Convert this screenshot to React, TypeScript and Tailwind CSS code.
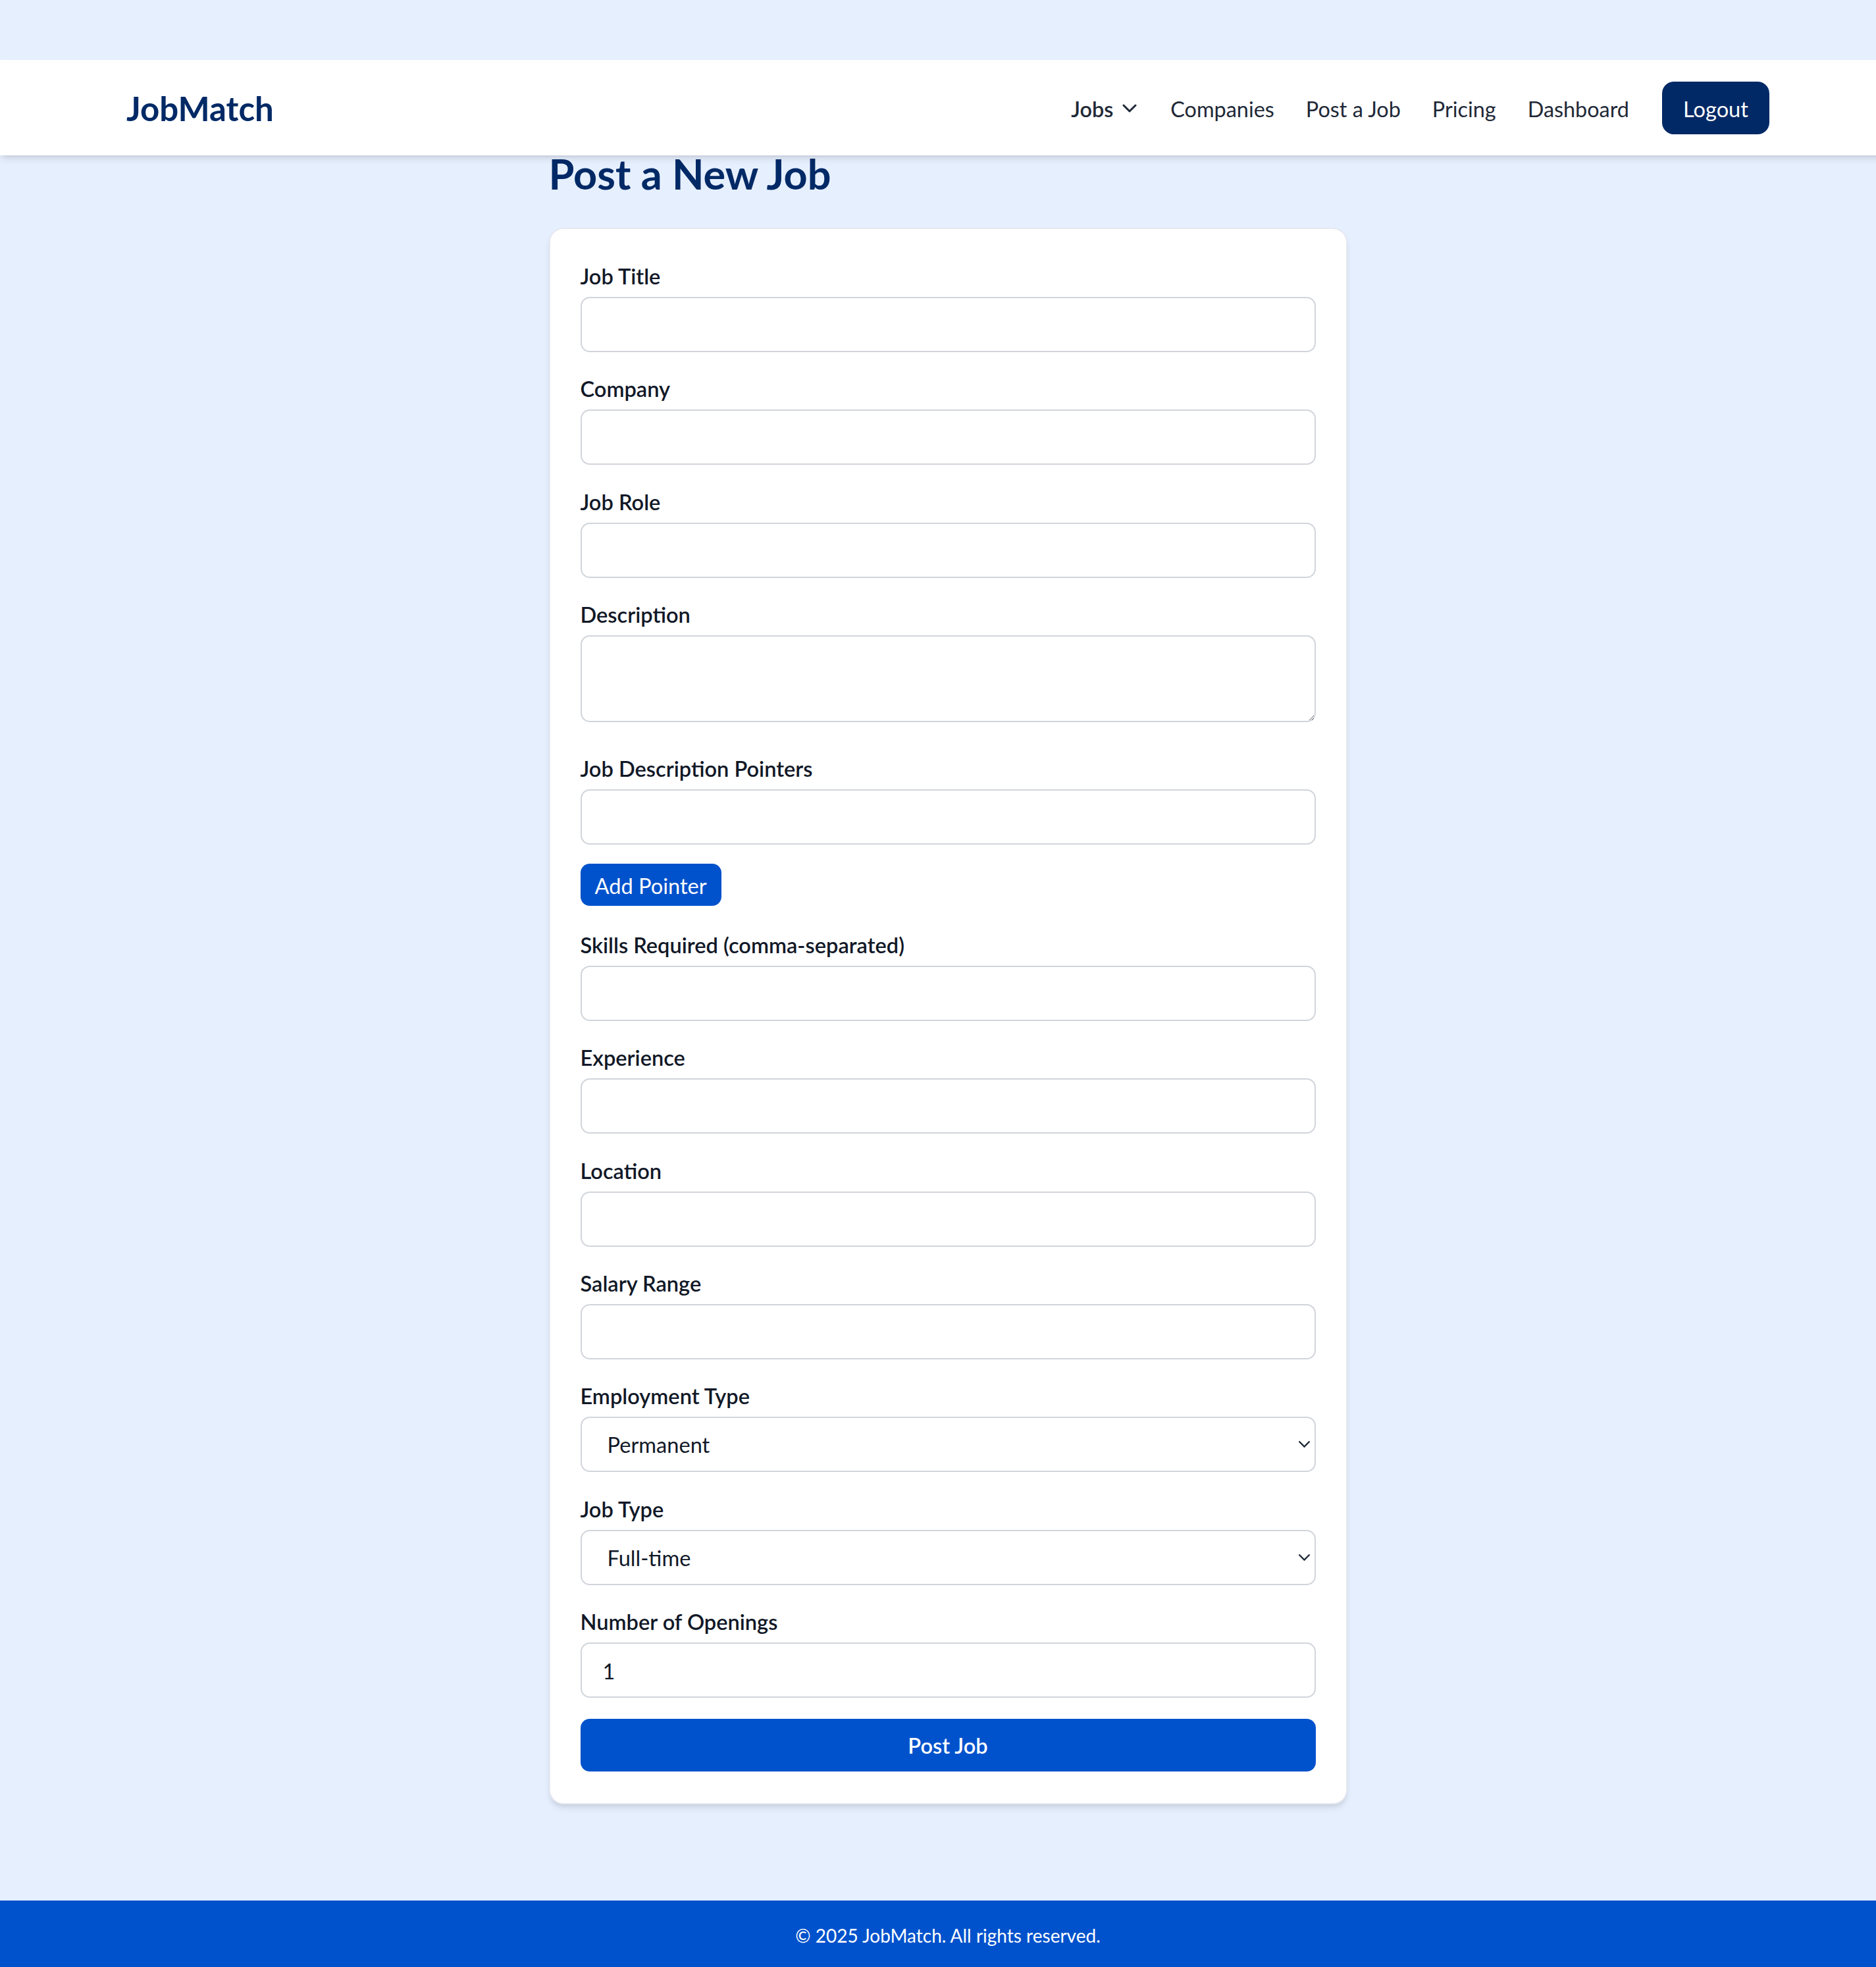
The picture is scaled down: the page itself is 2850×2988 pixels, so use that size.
import React from "react";

function Chevron({ className }: { className?: string }) {
  return (
    <svg className={className} width="22" height="13" viewBox="0 0 22 13" fill="none">
      <polyline points="2,2 11,11 20,2" stroke="currentColor" strokeWidth="3" strokeLinecap="round" strokeLinejoin="round" />
    </svg>
  );
}

function Field({ label, children }: { label: string; children: React.ReactNode }) {
  return (
    <div className="flex flex-col">
      <label className="block text-[32.6px] leading-[50px] font-semibold text-[#111827] pt-[2px] mb-[6px]">{label}</label>
      {children}
    </div>
  );
}

const inputCls =
  "block w-full h-[84px] border-2 border-[#d1d5db] rounded-[14px] bg-white px-[32px] pt-[3px] text-[32.4px] text-[#111827] outline-none [font-family:Lato,sans-serif]";

function TextInput({ value }: { value?: string }) {
  return <input type="text" className={inputCls} defaultValue={value} />;
}

function Select({ value, options }: { value: string; options: string[] }) {
  return (
    <div className="relative">
      <select
        defaultValue={value}
        className="block w-full h-[84px] appearance-none border-2 border-[#d1d5db] rounded-[14px] bg-white pl-[39px] pr-[40px] pt-[3px] text-[32.6px] text-[#111827] outline-none [font-family:Lato,sans-serif]"
      >
        {options.map((o) => (
          <option key={o}>{o}</option>
        ))}
      </select>
      <svg
        className="pointer-events-none absolute right-[8px] top-[36px] text-[#1f2937]"
        width="19"
        height="12"
        viewBox="0 0 19 12"
        fill="none"
      >
        <polyline points="1.5,1.5 9.5,9.5 17.5,1.5" stroke="currentColor" strokeWidth="2.4" />
      </svg>
    </div>
  );
}

export default function App() {
  return (
    <div className="w-full overflow-hidden bg-[#e6effe] [font-family:Lato,sans-serif]">
      <div className="w-[2880px] flex flex-col">
        <div className="h-[91px]" />
        <nav className="relative z-10 h-[145px] bg-white px-[192px] flex items-center justify-between shadow-[0_7px_11px_-2px_rgba(0,0,0,0.1),0_4px_7px_-4px_rgba(0,0,0,0.1)]">
          <div className="text-[51px] font-bold text-[#002966] leading-[62px] pt-[3px]">JobMatch</div>
          <div className="flex items-center gap-[48px] text-[32.4px] text-[#1f2937]">
            <div className="flex items-center gap-[14px] font-semibold pt-[5px] mr-[3px]">
              <span>Jobs</span>
              <Chevron className="text-[#1f2937] -mt-[3px]" />
            </div>
            <span className="pt-[5px]">Companies</span>
            <span className="pt-[5px]">Post a Job</span>
            <span className="pt-[5px]">Pricing</span>
            <span className="pt-[5px] mr-[2px]">Dashboard</span>
            <button className="w-[163px] h-[80px] pt-[5px] rounded-[18px] bg-[#002966] text-white text-[32.6px] flex items-center justify-center [font-family:Lato,sans-serif]">
              Logout
            </button>
          </div>
        </nav>

        <main className="w-[1213px] mx-auto pb-[146px]">
          <h1 className="text-[63px] leading-[56px] font-bold text-[#002966] mb-[54px]">Post a New Job</h1>
          <div className="bg-white rounded-[22px] border-2 border-[#e5e9f0] shadow-[0_7px_11px_-2px_rgba(0,0,0,0.1),0_4px_7px_-4px_rgba(0,0,0,0.1)] px-[46px] pt-[45px] pb-[48px]">
            <form className="flex flex-col gap-[29.45px]">
              <Field label="Job Title">
                <TextInput />
              </Field>
              <Field label="Company">
                <TextInput />
              </Field>
              <Field label="Job Role">
                <TextInput />
              </Field>
              <Field label="Description">
                <textarea className="block w-full h-[132px] mb-[14px] border-2 border-[#d1d5db] rounded-[14px] bg-white px-[32px] py-[14px] text-[32.4px] text-[#111827] outline-none [font-family:Lato,sans-serif]" />
              </Field>
              <Field label="Job Description Pointers">
                <TextInput />
              </Field>
              <div>
                <button
                  type="button"
                  className="h-[64px] w-[214px] pt-[4px] rounded-[14px] bg-[#0052cc] text-white text-[32.6px] flex items-center justify-center [font-family:Lato,sans-serif]"
                >
                  Add Pointer
                </button>
              </div>
              <div className="mt-[3px]">
                <Field label="Skills Required (comma-separated)">
                  <TextInput />
                </Field>
              </div>
              <Field label="Experience">
                <TextInput />
              </Field>
              <Field label="Location">
                <TextInput />
              </Field>
              <Field label="Salary Range">
                <TextInput />
              </Field>
              <Field label="Employment Type">
                <Select value="Permanent" options={["Permanent", "Contract", "Internship"]} />
              </Field>
              <Field label="Job Type">
                <Select value="Full-time" options={["Full-time", "Part-time", "Remote"]} />
              </Field>
              <Field label="Number of Openings">
                <input type="number" className={inputCls} defaultValue={1} />
              </Field>
              <button
                type="button"
                className="mt-[2px] h-[80px] w-full pt-[4px] rounded-[14px] bg-[#0052cc] text-white text-[32.6px] font-semibold flex items-center justify-center [font-family:Lato,sans-serif]"
              >
                Post Job
              </button>
            </form>
          </div>
        </main>

        <footer className="h-[103px] bg-[#0052cc] flex items-center justify-center text-white text-[28px] pt-[3px]">
          © 2025 JobMatch. All rights reserved.
        </footer>
      </div>
    </div>
  );
}
